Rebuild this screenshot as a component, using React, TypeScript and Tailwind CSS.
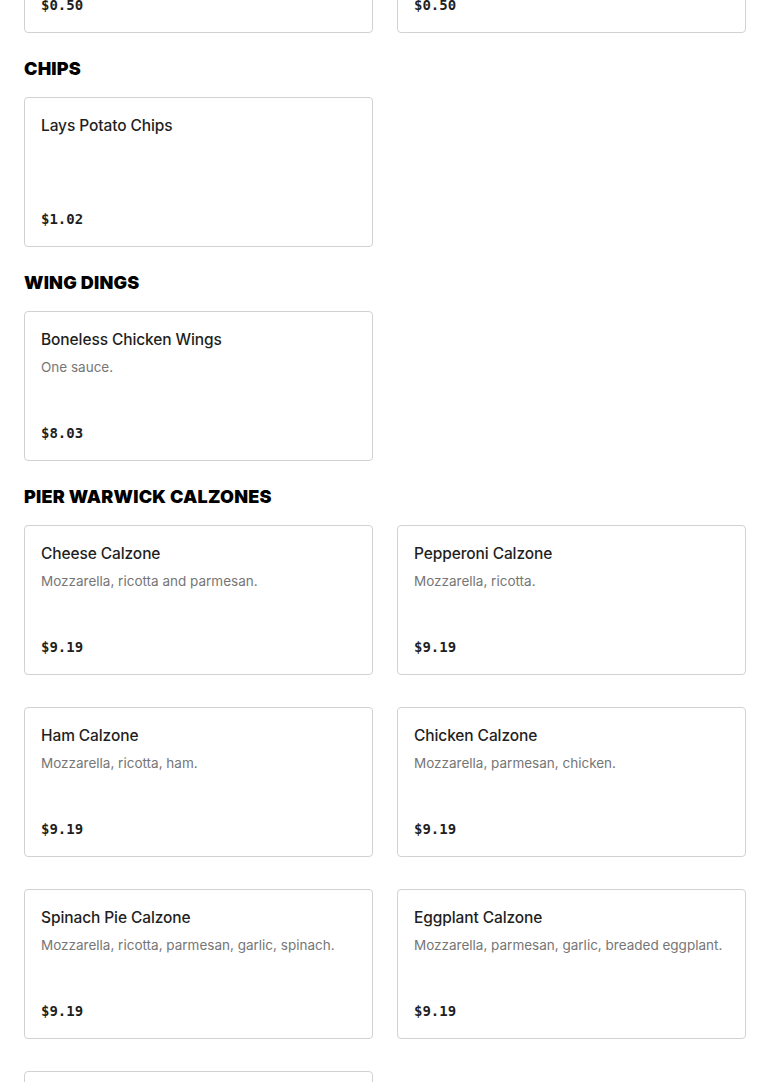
type Item = { name: string; desc?: string; price: string };

const sections: { title?: string; items: Item[] }[] = [
  {
    items: [
      { name: "Extra Ranch", desc: "Side of dressing.", price: "$0.50" },
      { name: "Extra Blue Cheese", desc: "Side of dressing.", price: "$0.50" },
    ],
  },
  { title: "Chips", items: [{ name: "Lays Potato Chips", price: "$1.02" }] },
  {
    title: "Wing Dings",
    items: [{ name: "Boneless Chicken Wings", desc: "One sauce.", price: "$8.03" }],
  },
  {
    title: "Pier Warwick Calzones",
    items: [
      { name: "Cheese Calzone", desc: "Mozzarella, ricotta and parmesan.", price: "$9.19" },
      { name: "Pepperoni Calzone", desc: "Mozzarella, ricotta.", price: "$9.19" },
      { name: "Ham Calzone", desc: "Mozzarella, ricotta, ham.", price: "$9.19" },
      { name: "Chicken Calzone", desc: "Mozzarella, parmesan, chicken.", price: "$9.19" },
      { name: "Spinach Pie Calzone", desc: "Mozzarella, ricotta, parmesan, garlic, spinach.", price: "$9.19" },
      { name: "Eggplant Calzone", desc: "Mozzarella, parmesan, garlic, breaded eggplant.", price: "$9.19" },
      { name: "Sausage Calzone", desc: "Mozzarella, ricotta, sausage.", price: "$9.19" },
    ],
  },
];

function MenuCard({ item }: { item: Item }) {
  return (
    <div className="h-[150px] rounded-[4px] border border-[#d2d2d2] bg-white px-4 pt-4 pb-[15px] flex flex-col">
      <h3 className="text-[15.5px] leading-6 font-medium text-[#1f1f1f] tracking-[-0.1px]">{item.name}</h3>
      {item.desc && (
        <p className="mt-[5px] text-[13.5px] leading-5 text-[#767676]">{item.desc}</p>
      )}
      <div className="mt-auto font-['DejaVu_Sans_Mono',monospace] text-[14px] leading-6 font-semibold text-[#1f1f1f]">
        {item.price}
      </div>
    </div>
  );
}

export default function App() {
  return (
    <div className="min-h-screen bg-white px-6 font-['Inter',sans-serif] overflow-hidden">
      <div className="-mt-[117px]">
        {sections.map((s, i) => (
          <section key={i} className={i === 0 ? "" : "mt-6"}>
            {s.title && (
              <h2 className="mb-4 text-[18px] leading-6 font-black uppercase text-black tracking-[0.2px]">
                {s.title}
              </h2>
            )}
            <div className="grid grid-cols-2 gap-x-6 gap-y-8">
              {s.items.map((it) => (
                <MenuCard key={it.name} item={it} />
              ))}
            </div>
          </section>
        ))}
      </div>
    </div>
  );
}
